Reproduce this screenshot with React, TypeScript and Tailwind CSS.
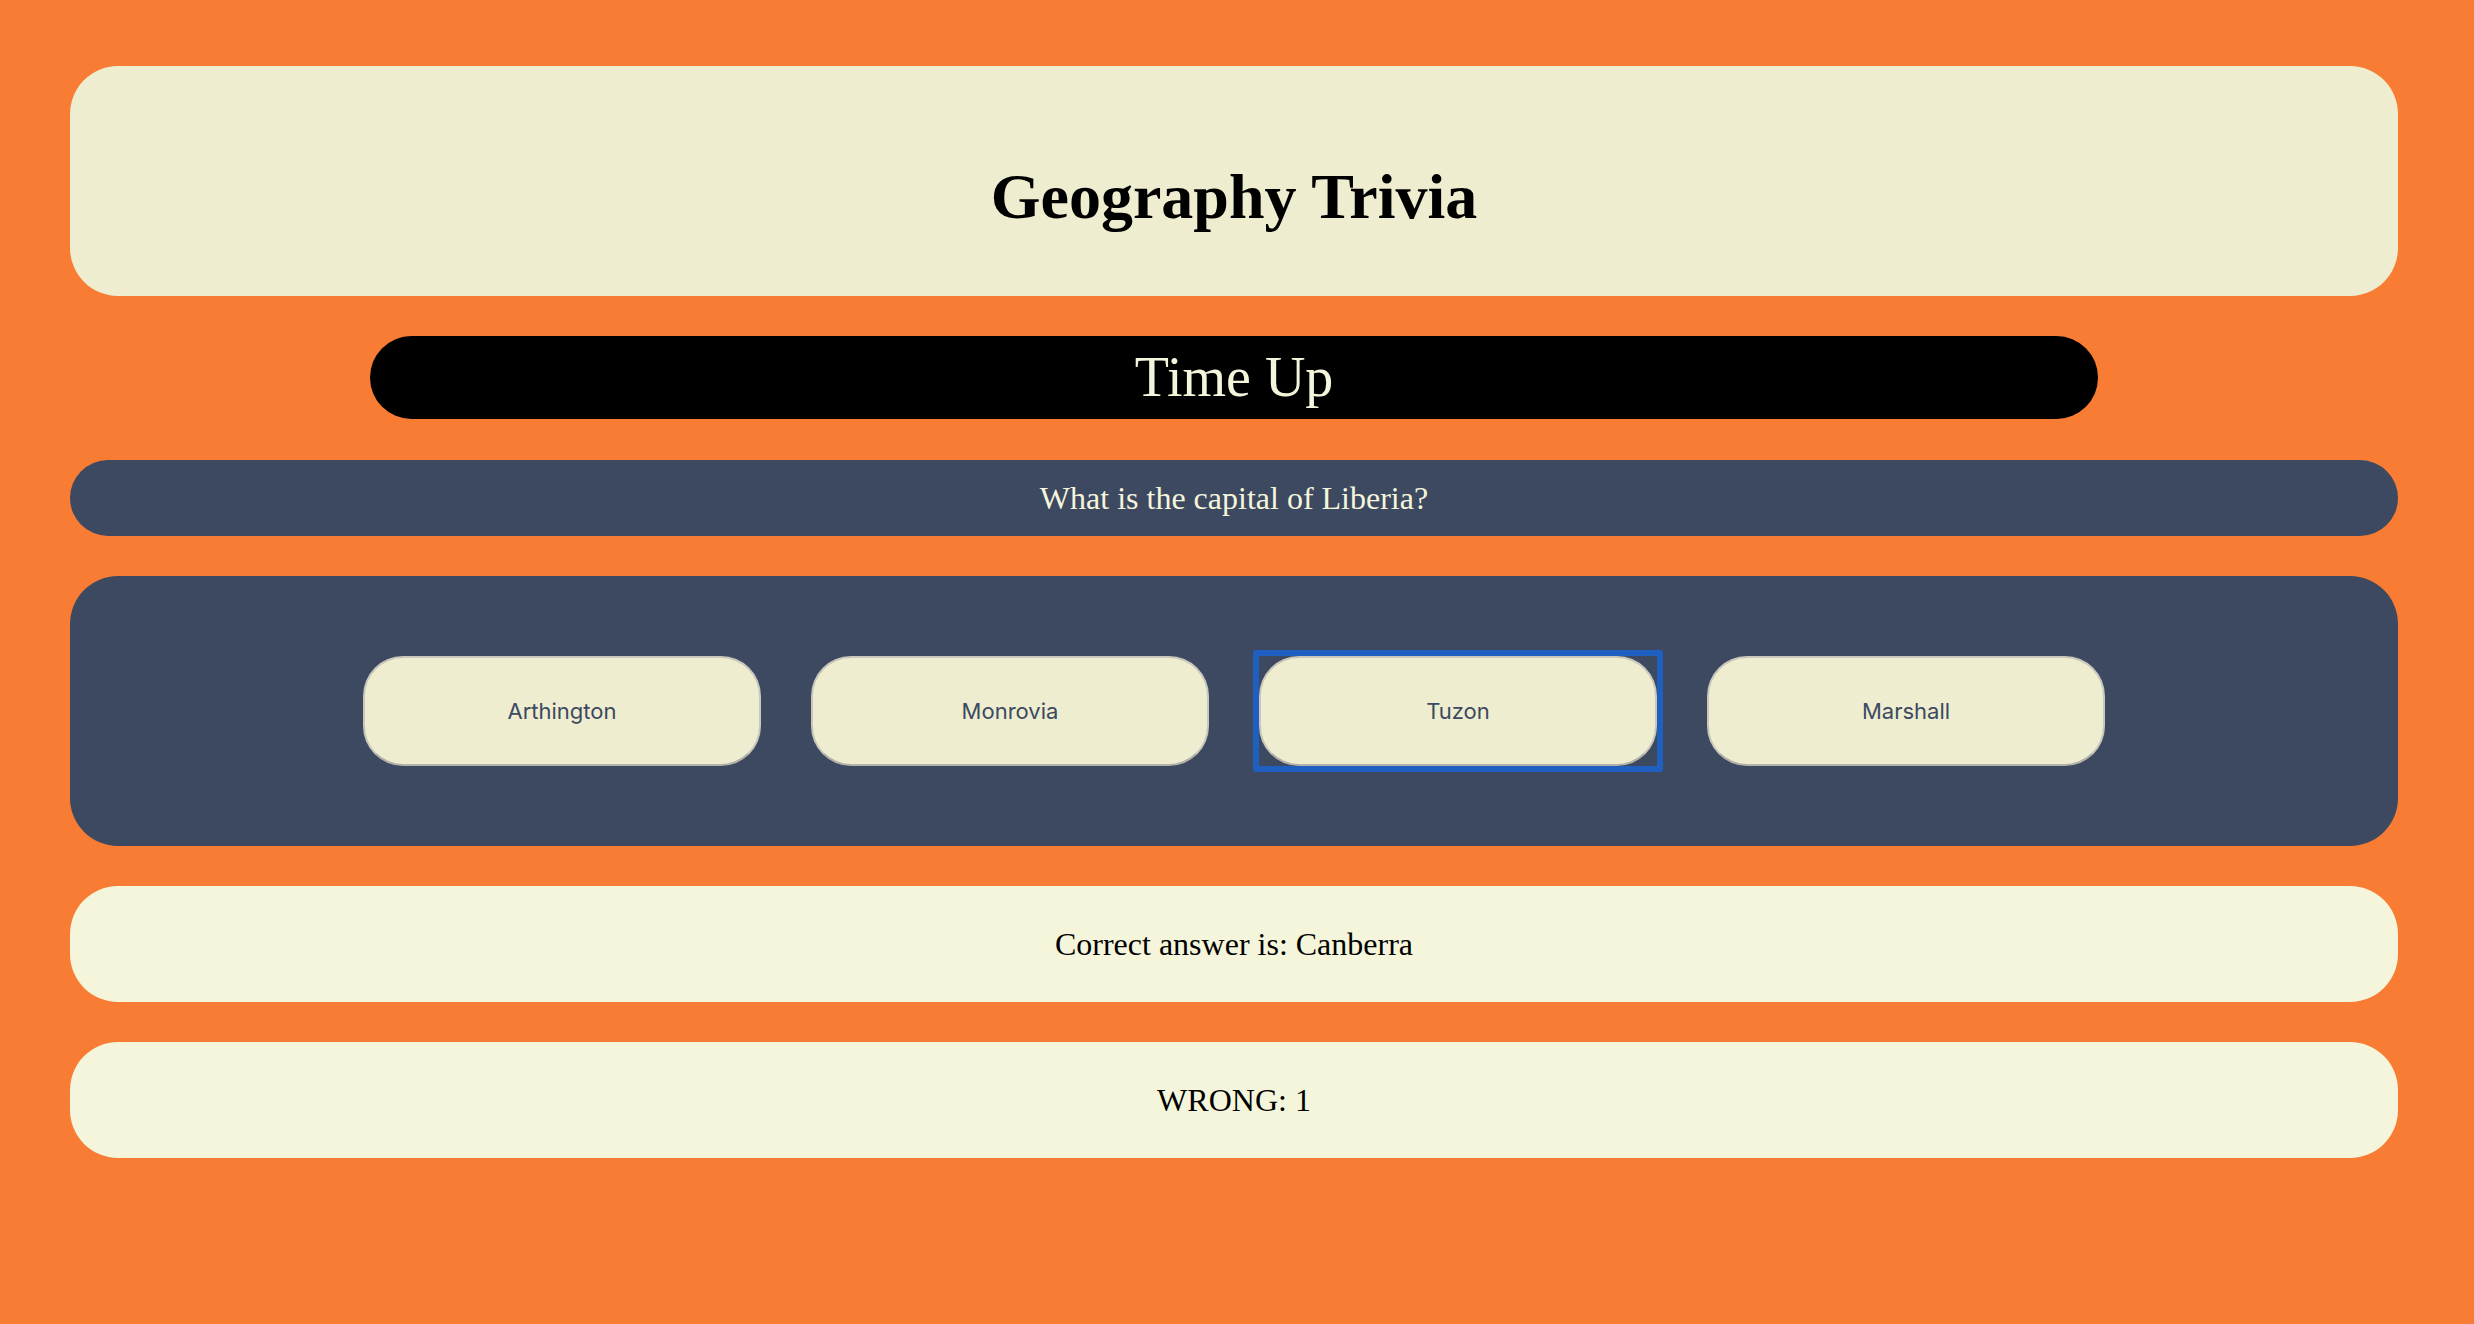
const answers = ['Arthington', 'Monrovia', 'Tuzon', 'Marshall'];
const focused = 'Tuzon';

const serif = "font-['Liberation_Serif','Times_New_Roman',serif]";

const AnswerButton = ({ label }: { label: string }) => (
  <button
    type="button"
    className="w-[398px] h-[110px] rounded-[40px] bg-[#eeedd0] border-2 border-[#c9c8bd] border-b-[#b3b2aa] text-[22px] text-[#3c4960] font-['Inter',sans-serif] outline-none"
  >
    {label}
  </button>
);

export default function App() {
  return (
    <div className="min-h-[1324px] bg-[#f87c33] pt-[66px] pb-10 pl-[70px] pr-[76px] flex flex-col gap-10">
      {/* Title */}
      <div className="rounded-[48px] bg-[#eeedd0] h-[230px] pt-[95px] text-center">
        <h1 className={`${serif} text-[64px] leading-[71px] font-bold text-black`}>Geography Trivia</h1>
      </div>

      {/* Timer */}
      <div className="w-[1728px] mx-auto rounded-full bg-black h-[83px] pt-[10px] text-center">
        <p className={`${serif} text-[56px] leading-[63px] text-[#f5f5dc]`}>Time Up</p>
      </div>

      {/* Question */}
      <div className="rounded-full bg-[#3c4960] h-[76px] flex items-center justify-center mt-px">
        <p className={`${serif} text-[32px] leading-[37px] text-[#f5f5dc]`}>What is the capital of Liberia?</p>
      </div>

      {/* Answers */}
      <div className="rounded-[48px] bg-[#3c4960] h-[270px] flex items-center justify-center gap-[50px]">
        {answers.map((a) =>
          a === focused ? (
            <span key={a} className="-m-[6px] border-[6px] border-[#1f5fbf] rounded-[3px] flex">
              <AnswerButton label={a} />
            </span>
          ) : (
            <AnswerButton key={a} label={a} />
          )
        )}
      </div>

      {/* Result */}
      <div className="rounded-[48px] bg-[#f5f5dc] h-[116px] flex items-center justify-center">
        <p className={`${serif} text-[32px] leading-[37px] text-black`}>Correct answer is: Canberra</p>
      </div>

      <div className="rounded-[48px] bg-[#f5f5dc] h-[116px] flex items-center justify-center">
        <p className={`${serif} text-[32px] leading-[37px] text-black`}>WRONG: 1</p>
      </div>
    </div>
  );
}
